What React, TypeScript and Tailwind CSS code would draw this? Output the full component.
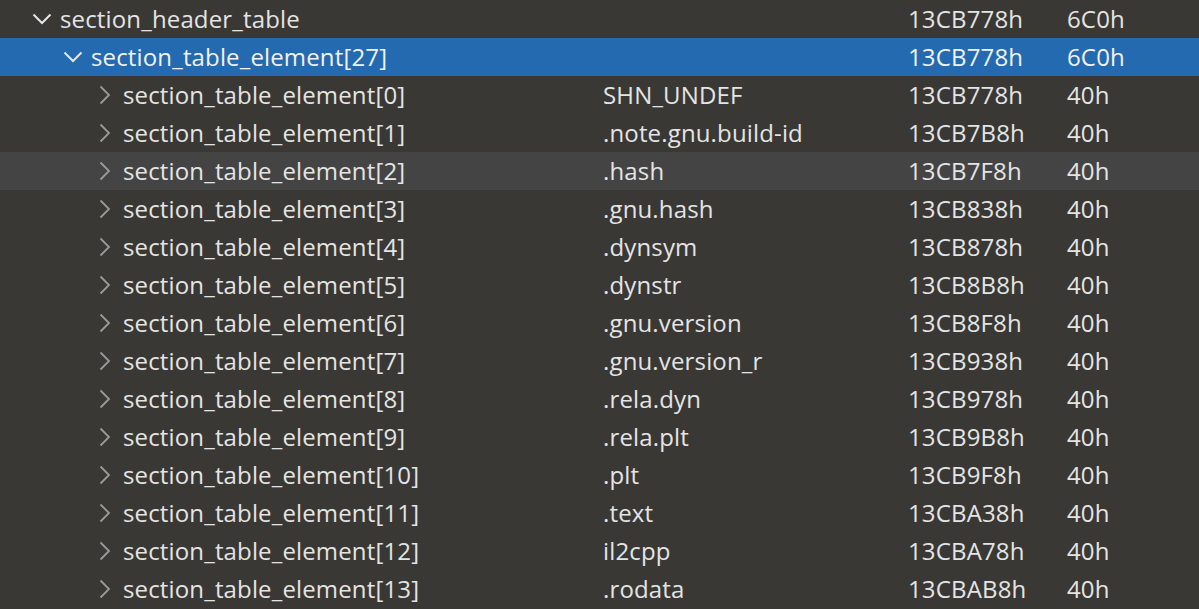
import React from "react";

type Row = { level: number; name: string; value: string; offset: string; size: string; expanded?: boolean; selected?: boolean; hover?: boolean };

const rows: Row[] = [
  { level: 0, name: "section_header_table", value: "", offset: "13CB778h", size: "6C0h", expanded: true },
  { level: 1, name: "section_table_element[27]", value: "", offset: "13CB778h", size: "6C0h", expanded: true, selected: true },
  { level: 2, name: "section_table_element[0]", value: "SHN_UNDEF", offset: "13CB778h", size: "40h" },
  { level: 2, name: "section_table_element[1]", value: ".note.gnu.build-id", offset: "13CB7B8h", size: "40h" },
  { level: 2, name: "section_table_element[2]", value: ".hash", offset: "13CB7F8h", size: "40h", hover: true },
  { level: 2, name: "section_table_element[3]", value: ".gnu.hash", offset: "13CB838h", size: "40h" },
  { level: 2, name: "section_table_element[4]", value: ".dynsym", offset: "13CB878h", size: "40h" },
  { level: 2, name: "section_table_element[5]", value: ".dynstr", offset: "13CB8B8h", size: "40h" },
  { level: 2, name: "section_table_element[6]", value: ".gnu.version", offset: "13CB8F8h", size: "40h" },
  { level: 2, name: "section_table_element[7]", value: ".gnu.version_r", offset: "13CB938h", size: "40h" },
  { level: 2, name: "section_table_element[8]", value: ".rela.dyn", offset: "13CB978h", size: "40h" },
  { level: 2, name: "section_table_element[9]", value: ".rela.plt", offset: "13CB9B8h", size: "40h" },
  { level: 2, name: "section_table_element[10]", value: ".plt", offset: "13CB9F8h", size: "40h" },
  { level: 2, name: "section_table_element[11]", value: ".text", offset: "13CBA38h", size: "40h" },
  { level: 2, name: "section_table_element[12]", value: "il2cpp", offset: "13CBA78h", size: "40h" },
  { level: 2, name: "section_table_element[13]", value: ".rodata", offset: "13CBAB8h", size: "40h" },
];

const padByLevel = ["pl-[32px]", "pl-[63px]", "pl-[95px]"];

function Chevron({ expanded }: { expanded?: boolean }) {
  if (expanded) {
    return (
      <svg width="20" height="12" viewBox="0 0 20 12" className="block">
        <path d="M1.5 1.5 L10 10 L18.5 1.5" fill="none" stroke="#e6e6e6" strokeWidth="2" />
      </svg>
    );
  }
  return (
    <svg width="12" height="20" viewBox="0 0 12 20" className="block">
      <path d="M1.5 1.5 L10 10 L1.5 18.5" fill="none" stroke="#9a9a9a" strokeWidth="1.8" />
    </svg>
  );
}

export default function App() {
  return (
    <div
      className="w-[1199px] h-[609px] overflow-hidden bg-[#393834] text-[#e4e4e4] text-[24px] tracking-[0.15px]"
      style={{ fontFamily: '"Open Sans", "Noto Sans", sans-serif' }}
    >
      {rows.map((r, i) => (
        <div
          key={i}
          className={
            "flex h-[38px] items-center whitespace-nowrap " +
            (r.selected ? "bg-[#236ab1] text-[#f2f2f2]" : r.hover ? "bg-[#444444]" : "")
          }
        >
          <div className={"flex w-[603px] items-center " + padByLevel[r.level]}>
            <div className="flex w-[20px] justify-center mr-[8px]">
              <Chevron expanded={r.expanded} />
            </div>
            <span>{r.name}</span>
          </div>
          <div className="w-[305px]">{r.value}</div>
          <div className="w-[159px]">{r.offset}</div>
          <div>{r.size}</div>
        </div>
      ))}
    </div>
  );
}
